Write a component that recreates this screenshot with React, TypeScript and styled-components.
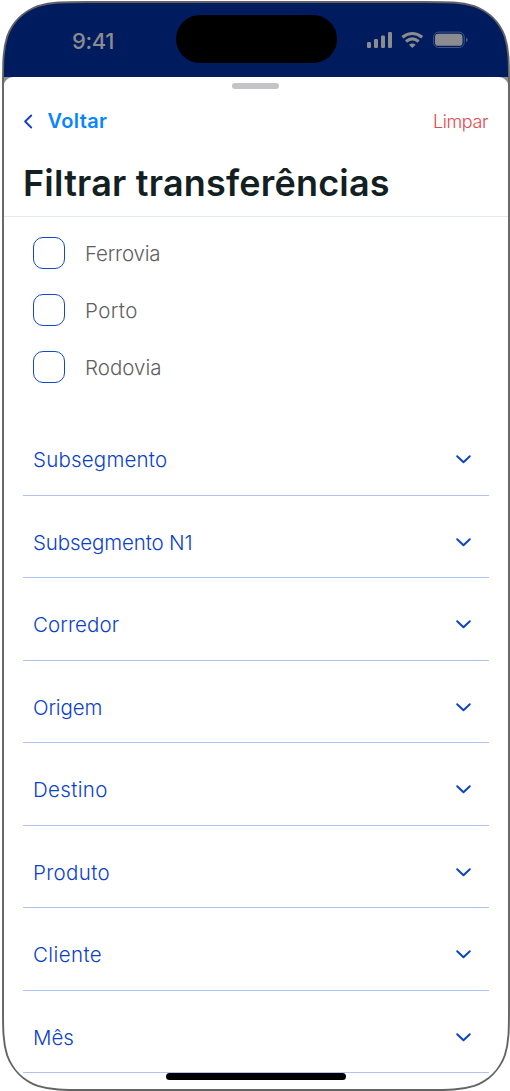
import React from "react";
import styled, { createGlobalStyle } from "styled-components";

const GlobalStyle = createGlobalStyle`
  *, *::before, *::after { box-sizing: border-box; }
  html, body { margin: 0; background: #fff; }
  body { font-family: Inter, "Noto Sans", sans-serif; overflow: hidden; }
  button { font: inherit; background: none; border: 0; padding: 0; margin: 0; }
`;

const Device = styled.div`
  position: relative;
  display: flex;
  flex-direction: column;
  width: 510px;
  height: 1091px;
  padding: 2px 1px 2px 3px;
  overflow: hidden;
`;

const StatusBar = styled.header`
  display: flex;
  align-items: flex-start;
  flex: 0 0 75px;
  background: #001c5e;
`;

const Clock = styled.time`
  width: 173px;
  padding: 25px 0 0 69px;
  font-size: 22px;
  line-height: 28px;
  font-weight: 500;
  letter-spacing: -0.4px;
  color: #8b8c90;
`;

const Island = styled.div`
  width: 161px;
  height: 48px;
  margin-top: 13px;
  border-radius: 24px;
  background: #000;
`;

const StatusIcons = styled.svg`
  width: 104px;
  height: 20px;
  margin: 28px 0 0 28px;
`;

const Backdrop = styled.div`
  flex: 1;
  min-height: 0;
  display: flex;
  background: #8f8f8f;
`;

const Sheet = styled.main`
  flex: 1;
  display: flex;
  flex-direction: column;
  background: #fff;
  border-radius: 11px 11px 0 0;
`;

const Grabber = styled.div`
  align-self: center;
  width: 47px;
  height: 6px;
  margin: 6px 1px 0 0;
  border-radius: 3px;
  background: #c4c4c6;
`;

const NavRow = styled.nav`
  display: flex;
  align-items: center;
  justify-content: space-between;
  height: 30px;
  margin: 17px 21px 0 20px;
`;

const BackButton = styled.button`
  display: flex;
  align-items: center;
  gap: 14.5px;
  color: #0a84ff;
  font-size: 20px;
  font-weight: 600;
  line-height: 30px;
  letter-spacing: 0.35px;
`;

const ClearButton = styled.button`
  padding-top: 2px;
  color: #e5484d;
  font-size: 18px;
  font-weight: 300;
  line-height: 32px;
  letter-spacing: -0.4px;
`;

const Title = styled.h1`
  margin: 0;
  padding: 22px 20px 0;
  height: 81px;
  font-size: 36px;
  line-height: 50px;
  font-weight: 600;
  letter-spacing: 0.2px;
  color: #131f22;
  white-space: nowrap;
  border-bottom: 1px solid #e3e8f5;
`;

const Options = styled.div`
  display: flex;
  flex-direction: column;
  gap: 24.7px;
  padding: 20.4px 0 0 30px;
`;

const Option = styled.label<{ $spacing: number }>`
  display: flex;
  align-items: center;
  gap: 20px;
  height: 32px;
  font-size: 20.5px;
  font-weight: 300;
  line-height: 26px;
  letter-spacing: ${(p) => p.$spacing}px;
  color: #606060;

  span {
    padding-top: 2px;
  }
`;

const Checkbox = styled.input`
  appearance: none;
  width: 32px;
  height: 32px;
  margin: 0;
  border: 1.4px solid #1249c6;
  border-radius: 10px;
  background: #fff;
`;

const Sections = styled.section`
  padding: 30.7px 20px 0 20px;
`;

const SectionRow = styled.button<{ $spacing: number }>`
  display: flex;
  align-items: center;
  justify-content: space-between;
  width: 100%;
  height: 82.5px;
  padding: 11.4px 18.5px 0 10px;
  border-bottom: 1px solid #adc4f1;
  font-size: 20.5px;
  font-weight: 300;
  letter-spacing: ${(p) => p.$spacing}px;
  color: #0b41c9;
`;

const HomeIndicator = styled.div`
  position: absolute;
  left: 166px;
  top: 1073px;
  width: 180px;
  height: 7px;
  border-radius: 3.5px;
  background: #000;
`;

const Frame = styled.svg`
  position: absolute;
  inset: 0;
  pointer-events: none;
`;

const OPTIONS = [
  { label: "Ferrovia", spacing: -0.2 },
  { label: "Porto", spacing: 0.4 },
  { label: "Rodovia", spacing: 0 },
];

const SECTIONS = [
  { label: "Subsegmento", spacing: 0.2 },
  { label: "Subsegmento N1", spacing: -0.15 },
  { label: "Corredor", spacing: 0.1 },
  { label: "Origem", spacing: -0.15 },
  { label: "Destino", spacing: 0.35 },
  { label: "Produto", spacing: 0.35 },
  { label: "Cliente", spacing: 0.4 },
  { label: "Mês", spacing: 0 },
];

/** Rounded rectangle with continuous-curvature corners. */
function continuousRect(l: number, t: number, r: number, b: number, radius: number) {
  const k = [1.528665, 1.088493, 0.868407, 0.631494, 0.074911, 0.372824, 0.16906].map((n) => n * radius);
  const corner = (x: number, y: number, sx: number, sy: number, vertical: boolean) => {
    const pts = [
      [k[1], 0], [k[2], 0], [k[3], k[4]],
      [k[5], k[6]], [k[6], k[5]], [k[4], k[3]],
      [0, k[2]], [0, k[1]], [0, k[0]],
    ].map(([a, c]) => (vertical ? [c, a] : [a, c]));
    const first = vertical ? [0, k[0]] : [k[0], 0];
    const at = ([a, c]: number[]) => `${x + sx * a} ${y + sy * c}`;
    return `L${at(first)}` + [0, 3, 6].map((i) => `C${at(pts[i])} ${at(pts[i + 1])} ${at(pts[i + 2])}`).join("");
  };
  return (
    `M${l + k[0]} ${t}` +
    corner(r, t, -1, 1, false) +
    corner(r, b, -1, -1, true) +
    corner(l, b, 1, -1, false) +
    corner(l, t, 1, 1, true) +
    "Z"
  );
}

const outline = continuousRect(3, 2, 509, 1090, 55);

function DeviceFrame() {
  return (
    <Frame width="510" height="1091" viewBox="0 0 510 1091" fill="none">
      <path d={`M0 0H510V1091H0Z${outline}`} fill="#fff" fillRule="evenodd" />
      <path d={outline} stroke="#636363" strokeWidth="1.9" />
    </Frame>
  );
}

function ChevronDown() {
  return (
    <svg width="15" height="9" viewBox="0 0 15 9" fill="none">
      <path d="M1.2 1.2L7.5 7.3L13.8 1.2" stroke="#0b41c9" strokeWidth="1.9" strokeLinecap="round" strokeLinejoin="round" />
    </svg>
  );
}

export default function App() {
  return (
    <Device>
      <GlobalStyle />
      <StatusBar>
        <Clock>9:41</Clock>
        <Island />
        <StatusIcons viewBox="0 0 104 20" fill="#8b8c90">
          <rect x="2" y="12" width="4" height="6" rx="1.2" />
          <rect x="9" y="9" width="4" height="9" rx="1.2" />
          <rect x="16" y="5.5" width="4" height="12.5" rx="1.2" />
          <rect x="23" y="2" width="4" height="16" rx="1.2" />
          <g fill="none" stroke="#8b8c90" strokeWidth="3.1">
            <path d="M37.4 7.3Q47.3 -0.3 57.2 7.3" />
            <path d="M41 11.5Q47.3 6.3 53.6 11.5" />
          </g>
          <path d="M43.9 14.7Q47.3 12.2 50.7 14.7L47.3 18.1Z" />
          <rect x="68.6" y="2.1" width="30.6" height="15.4" rx="5" fill="none" stroke="#44547f" strokeWidth="1" />
          <rect x="70" y="3.8" width="27.5" height="12" rx="3.4" />
          <path d="M101 7.4Q102.8 8.2 102.8 9.8Q102.8 11.4 101 12.2Z" fill="#44547f" />
        </StatusIcons>
      </StatusBar>
      <Backdrop>
        <Sheet>
          <Grabber />
          <NavRow>
            <BackButton>
              <svg width="10" height="15" viewBox="0 0 10 15" fill="none">
                <path d="M8.2 1.5L2.1 7.5L8.2 13.5" stroke="#1540c8" strokeWidth="1.9" strokeLinecap="round" strokeLinejoin="round" />
              </svg>
              Voltar
            </BackButton>
            <ClearButton>Limpar</ClearButton>
          </NavRow>
          <Title>Filtrar transferências</Title>
          <Options>
            {OPTIONS.map((o) => (
              <Option key={o.label} $spacing={o.spacing}>
                <Checkbox type="checkbox" />
                <span>{o.label}</span>
              </Option>
            ))}
          </Options>
          <Sections>
            {SECTIONS.map((s) => (
              <SectionRow key={s.label} $spacing={s.spacing}>
                {s.label}
                <ChevronDown />
              </SectionRow>
            ))}
          </Sections>
        </Sheet>
      </Backdrop>
      <HomeIndicator />
      <DeviceFrame />
    </Device>
  );
}
